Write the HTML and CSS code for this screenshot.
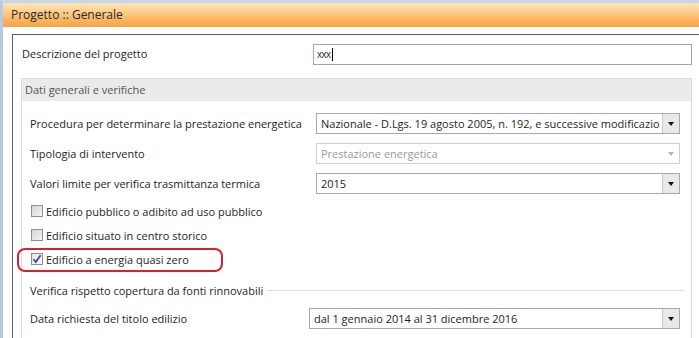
FILE: index.html
```html
<html>

<head>
    <meta charset="utf-8">
    <title>Progetto :: Generale</title>
    <link rel="stylesheet" href="styles.css">
</head>

<body>
    <div class="frame">
        <div class="caption">Progetto :: Generale</div>
        <div class="content">
            <div class="panel">
                <div class="desc">
                    <span class="label">Descrizione del progetto</span>
                    <div class="textbox">xxx<span class="caret"></span></div>
                </div>

                <div class="group">
                    <div class="group-head">Dati generali e verifiche</div>
                    <div class="group-body">
                        <div class="field">
                            <span class="label">Procedura per determinare la prestazione energetica</span>
                            <div class="combo">
                                <span class="combo-text">Nazionale - D.Lgs. 19 agosto 2005, n. 192, e successive modificazio</span>
                                <span class="combo-btn"></span>
                            </div>
                        </div>
                        <div class="field">
                            <span class="label">Tipologia di intervento</span>
                            <div class="combo disabled">
                                <span class="combo-text">Prestazione energetica</span>
                                <span class="combo-btn"></span>
                            </div>
                        </div>
                        <div class="field">
                            <span class="label">Valori limite per verifica trasmittanza termica</span>
                            <div class="combo">
                                <span class="combo-text">2015</span>
                                <span class="combo-btn"></span>
                            </div>
                        </div>

                        <div class="checks">
                            <div class="check">
                                <span class="box"></span>
                                <span>Edificio pubblico o adibito ad uso pubblico</span>
                            </div>
                            <div class="check">
                                <span class="box"></span>
                                <span>Edificio situato in centro storico</span>
                            </div>
                            <div class="check highlight">
                                <span class="box checked">
                                    <svg width="10" height="10" viewBox="0 0 10 10">
                                        <path d="M1.5 5.2 L3.8 8 L8.6 1.2" fill="none" stroke="#3d4f86" stroke-width="1.8" />
                                    </svg>
                                </span>
                                <span>Edificio a energia quasi zero</span>
                            </div>
                        </div>

                        <div class="section">
                            <span>Verifica rispetto copertura da fonti rinnovabili</span>
                            <span class="rule"></span>
                        </div>

                        <div class="field last">
                            <span class="label">Data richiesta del titolo edilizio</span>
                            <div class="combo wide">
                                <span class="combo-text">dal 1 gennaio 2014 al 31 dicembre 2016</span>
                                <span class="combo-btn"></span>
                            </div>
                        </div>
                    </div>
                </div>
            </div>
        </div>
    </div>
</body>

</html>
```

FILE: styles.css
```css
html,
body {
    margin: 0;
    padding: 0;
}

body {
    width: 699px;
    height: 338px;
    overflow: hidden;
    background: #fff;
    color: #1e1e1e;
    font: 400 11px/1 "Open Sans", sans-serif;
}

.frame {
    height: 338px;
    overflow: hidden;
    box-sizing: border-box;
    border-top: 3px solid #c6d5e9;
    border-left: 3px solid #b7cae3;
}

.caption {
    height: 24px;
    line-height: 24px;
    padding-left: 8px;
    font-size: 12px;
    color: #2a2a2a;
    background: linear-gradient(#fde6b8 0%, #fcd08f 35%, #f9b15a 75%, #f8a446 100%);
}

.content {
    padding: 7px 0 0 9px;
}

.panel {
    height: 294px;
    overflow: hidden;
    border-top: 1px solid #5c5c5c;
    border-left: 1px solid #5c5c5c;
    padding: 9px 0 0 8px;
}

.desc {
    width: 671px;
    display: flex;
    justify-content: space-between;
    align-items: center;
}

.desc .label {
    padding-left: 1px;
    margin-top: -2px;
}

.textbox {
    width: 379px;
    height: 21px;
    box-sizing: border-box;
    border: 1px solid #a7a7a7;
    padding-left: 3px;
    display: flex;
    align-items: center;
    font: 10px "Liberation Sans", sans-serif;
    letter-spacing: -0.5px;
    color: #333;
}

.caret {
    display: inline-block;
    width: 1px;
    height: 13px;
    margin-left: 1px;
    background: #000;
}

.group {
    margin-top: 13px;
    width: 671px;
    box-sizing: border-box;
    border: 1px solid #dcdcdc;
}

.group-head {
    height: 22px;
    line-height: 22px;
    padding-left: 3px;
    background: #ebebeb;
    color: #555;
}

.group-body {
    display: flex;
    flex-direction: column;
    padding: 12px 11px 10px 8px;
}

.field {
    display: flex;
    justify-content: space-between;
    align-items: center;
    height: 21px;
}

.field + .field {
    margin-top: 9px;
}

.combo {
    width: 364px;
    height: 21px;
    box-sizing: border-box;
    border: 1px solid #a9a9a9;
    display: flex;
}

.combo.wide {
    width: 371px;
}

.combo-text {
    flex: 1;
    padding-left: 4px;
    line-height: 19px;
    white-space: nowrap;
}

.combo-btn {
    width: 16px;
    border-left: 1px solid #c9c9c9;
    background: #e9e9e9;
    display: flex;
    align-items: center;
    justify-content: center;
}

.combo-btn::after {
    content: "";
    border-left: 3.5px solid transparent;
    border-right: 3.5px solid transparent;
    border-top: 4px solid #111;
}

.combo.disabled {
    border-color: #cfcfcf;
}

.combo.disabled .combo-text {
    color: #9a9a9a;
}

.combo.disabled .combo-btn {
    background: #fff;
    border-left-color: #fff;
}

.combo.disabled .combo-btn::after {
    border-top-color: #b5b5b5;
}

.checks {
    margin-top: 5px;
}

.check {
    display: flex;
    align-items: center;
    gap: 3px;
    height: 24px;
    padding-left: 1px;
}

.box {
    width: 12px;
    height: 12px;
    box-sizing: border-box;
    border: 1px solid #8f8f8f;
    background: linear-gradient(135deg, #d6d6d6, #f4f4f4);
    display: flex;
    align-items: center;
    justify-content: center;
}

.box.checked {
    background: linear-gradient(135deg, #e2e6ee, #f7f8fb);
}

.highlight {
    position: relative;
}

.highlight::after {
    content: "";
    position: absolute;
    left: -13px;
    top: 1px;
    width: 206px;
    height: 24px;
    box-sizing: border-box;
    border: 2px solid #d2232a;
    border-radius: 8px;
}

.section {
    margin-top: 8px;
    height: 22px;
    display: flex;
    align-items: center;
    gap: 4px;
}

.rule {
    flex: 1;
    height: 1px;
    margin-right: -4px;
    background: #dedede;
}

.field.last {
    margin-top: 7px;
}
```
